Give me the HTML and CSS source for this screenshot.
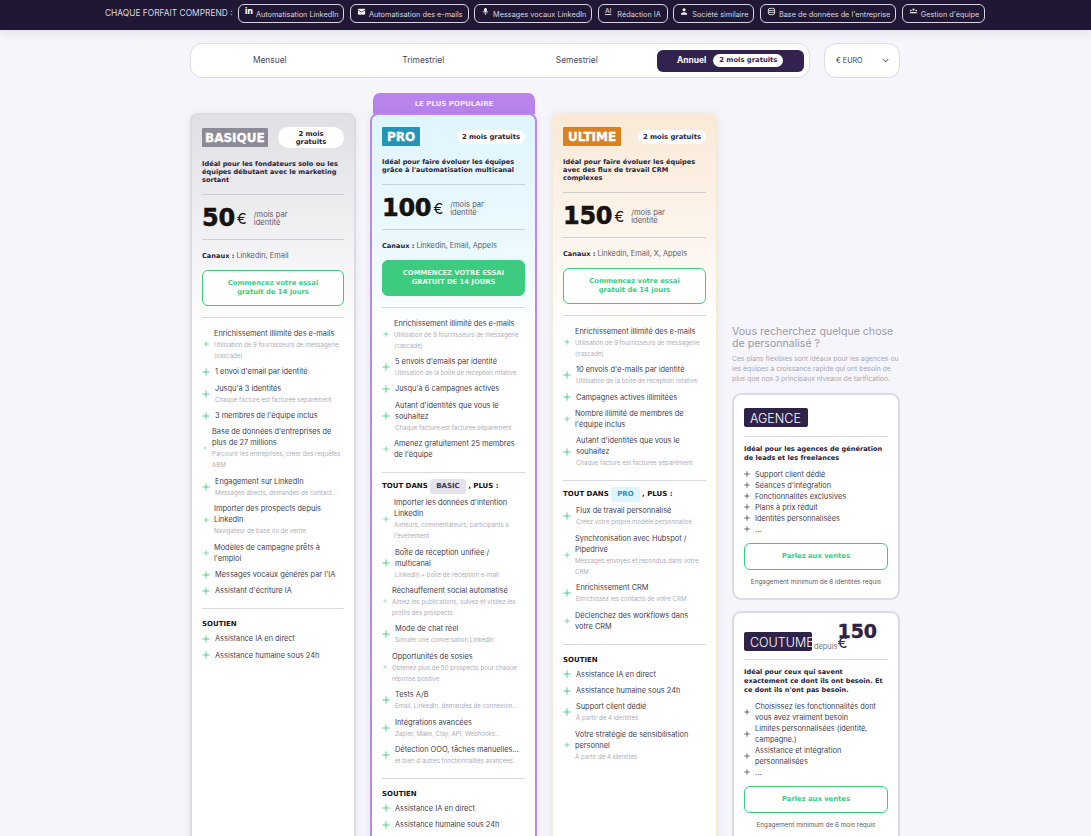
FILE: index.html
```html
<!DOCTYPE html>
<html lang="fr">
<head>
  <meta charset="UTF-8">
  <meta name="viewport" content="width=device-width, initial-scale=1.0">
  <title>Tarifs</title>
  <link rel="stylesheet" href="styles.css">
</head>
<body>
  <svg class="sprite" width="0" height="0">
    <symbol id="plus" viewBox="0 0 10 10"><path d="M5 .5v9M.5 5h9" fill="none" stroke="currentColor" stroke-width="1.1"/></symbol>
  </svg>

  <header class="topbar">
    <span class="topbar-label">CHAQUE FORFAIT COMPREND :</span>
    <span class="chip"><b class="chip-in">in</b> Automatisation LinkedIn</span>
    <span class="chip"><svg viewBox="0 0 10 10"><path d="M1 2h8v6.500H1z" fill="#fff"/><path d="M1 3.500l4 2 4-2" fill="none" stroke="#1f1733" stroke-width=".8"/></svg> Automatisation des e-mails</span>
    <span class="chip"><svg viewBox="0 0 10 10"><rect x="3.500" y="1" width="3" height="5" rx="1.500" fill="#fff"/><path d="M2.500 4.500c0 3.300 5 3.300 5 0M5 7v2" fill="none" stroke="#fff" stroke-width=".7"/></svg> Messages vocaux LinkedIn</span>
    <span class="chip chip-wide"><b class="chip-ai">AI</b> Rédaction IA</span>
    <span class="chip"><svg viewBox="0 0 10 10"><circle cx="4.500" cy="3" r="1.700" fill="#fff"/><path d="M1 8.500c0-3.500 7-3.500 7 0z" fill="#fff"/></svg> Société similaire</span>
    <span class="chip"><svg viewBox="0 0 10 10"><rect x="1.500" y="1.500" width="7" height="7" rx="2" fill="none" stroke="#fff" stroke-width=".9"/><path d="M1.500 4h7M1.500 6h7" stroke="#fff" stroke-width=".8"/></svg> Base de données de l'entreprise</span>
    <span class="chip"><svg viewBox="0 0 10 10"><circle cx="5" cy="3" r="1.200" fill="#fff"/><circle cx="2" cy="4" r=".9" fill="#fff"/><circle cx="8" cy="4" r=".9" fill="#fff"/><path d="M.5 7c0-2 9-2 9 0z" fill="#fff"/></svg> Gestion d'équipe</span>
  </header>

  <main class="page">
    <div class="controls">
      <nav class="tabs">
        <span class="tab">Mensuel</span>
        <span class="tab">Trimestriel</span>
        <span class="tab">Semestriel</span>
        <span class="tab tab-active"><b>Annuel</b> <em class="tab-pill">2 mois gratuits</em></span>
      </nav>
      <div class="currency">
        <span>€ EURO</span>
        <svg viewBox="0 0 10 10"><path d="M2 3.500l3 3 3-3" fill="none" stroke="#2a2140" stroke-width="1"/></svg>
      </div>
    </div>

    <div class="plans">
      <section class="plan plan-basic">
        <div class="plan-head">
          <span class="tag tag-basic">BASIQUE</span>
          <span class="free free-wrap">2 mois gratuits</span>
        </div>
        <p class="plan-desc">Idéal pour les fondateurs solo ou les équipes débutant avec le marketing sortant</p>
        <div class="price"><strong>50</strong><span class="euro">€</span><small>/mois par identité</small></div>
        <p class="channels"><b>Canaux :</b> Linkedin, Email</p>
        <a class="cta">Commencez votre essai<br>gratuit de 14 jours</a>
        <ul class="features">
          <li class="small-icon"><svg><use href="#plus"/></svg><div>Enrichissement illimité des e-mails<small>Utilisation de 9 fournisseurs de messagerie (cascade)</small></div></li>
          <li><svg><use href="#plus"/></svg><div>1 envoi d'email par identité</div></li>
          <li><svg><use href="#plus"/></svg><div>Jusqu'à 3 identités<small>Chaque facture est facturée séparément</small></div></li>
          <li><svg><use href="#plus"/></svg><div>3 membres de l'équipe inclus</div></li>
          <li class="tiny-icon"><svg><use href="#plus"/></svg><div>Base de données d'entreprises de plus de 27 millions<small>Parcourir les entreprises, créer des requêtes ABM</small></div></li>
          <li><svg><use href="#plus"/></svg><div>Engagement sur LinkedIn<small>Messages directs, demandes de contact...</small></div></li>
          <li class="small-icon"><svg><use href="#plus"/></svg><div>Importer des prospects depuis LinkedIn<small>Navigateur de base ou de vente</small></div></li>
          <li class="small-icon"><svg><use href="#plus"/></svg><div>Modèles de campagne prêts à l'emploi</div></li>
          <li><svg><use href="#plus"/></svg><div>Messages vocaux générés par l'IA</div></li>
          <li><svg><use href="#plus"/></svg><div>Assistant d'écriture IA</div></li>
        </ul>
        <h4 class="group-title">SOUTIEN</h4>
        <ul class="features features-sub">
          <li><svg><use href="#plus"/></svg><div>Assistance IA en direct</div></li>
          <li><svg><use href="#plus"/></svg><div>Assistance humaine sous 24h</div></li>
        </ul>
      </section>

      <div class="plan-col-popular">
        <div class="banner">LE PLUS POPULAIRE</div>
        <section class="plan plan-pro">
          <div class="plan-head">
            <span class="tag tag-pro">PRO</span>
            <span class="free">2 mois gratuits</span>
          </div>
          <p class="plan-desc">Idéal pour faire évoluer les équipes grâce à l'automatisation multicanal</p>
          <div class="price"><strong>100</strong><span class="euro">€</span><small>/mois par identité</small></div>
          <p class="channels"><b>Canaux :</b> Linkedin, Email, Appels</p>
          <a class="cta cta-solid">COMMENCEZ VOTRE ESSAI<br>GRATUIT DE 14 JOURS</a>
          <ul class="features">
            <li class="small-icon"><svg><use href="#plus"/></svg><div>Enrichissement illimité des e-mails<small>Utilisation de 9 fournisseurs de messagerie (cascade)</small></div></li>
            <li><svg><use href="#plus"/></svg><div>5 envois d'emails par identité<small>Utilisation de la boîte de réception rotative</small></div></li>
            <li><svg><use href="#plus"/></svg><div>Jusqu'à 6 campagnes actives</div></li>
            <li><svg><use href="#plus"/></svg><div>Autant d'identités que vous le souhaitez<small>Chaque facture est facturée séparément</small></div></li>
            <li class="small-icon"><svg><use href="#plus"/></svg><div>Amenez gratuitement 25 membres de l'équipe</div></li>
          </ul>
          <h4 class="group-title group-tagged">TOUT DANS <span class="mini-tag mini-basic">BASIC</span> , PLUS :</h4>
          <ul class="features features-sub">
            <li class="small-icon"><svg><use href="#plus"/></svg><div>Importer les données d'intention LinkedIn<small>Aimeurs, commentateurs, participants à l'événement</small></div></li>
            <li><svg><use href="#plus"/></svg><div>Boîte de réception unifiée / multicanal<small>LinkedIn + boîte de réception e-mail</small></div></li>
            <li class="tiny-icon"><svg><use href="#plus"/></svg><div>Réchauffement social automatisé<small>Aimez les publications, suivez et visitez les profils des prospects</small></div></li>
            <li><svg><use href="#plus"/></svg><div>Mode de chat réel<small>Simuler une conversation LinkedIn</small></div></li>
            <li class="tiny-icon"><svg><use href="#plus"/></svg><div>Opportunités de sosies<small>Obtenez plus de 50 prospects pour chaque réponse positive</small></div></li>
            <li><svg><use href="#plus"/></svg><div>Tests A/B<small>Email, LinkedIn, demandes de connexion...</small></div></li>
            <li><svg><use href="#plus"/></svg><div>Intégrations avancées<small>Zapier, Make, Clay, API, Webhooks...</small></div></li>
            <li><svg><use href="#plus"/></svg><div>Détection OOO, tâches manuelles...<small>et bien d'autres fonctionnalités avancées</small></div></li>
          </ul>
          <h4 class="group-title">SOUTIEN</h4>
          <ul class="features features-sub">
            <li><svg><use href="#plus"/></svg><div>Assistance IA en direct</div></li>
            <li><svg><use href="#plus"/></svg><div>Assistance humaine sous 24h</div></li>
          </ul>
        </section>
      </div>

      <section class="plan plan-ultimate">
        <div class="plan-head">
          <span class="tag tag-ultimate">ULTIME</span>
          <span class="free">2 mois gratuits</span>
        </div>
        <p class="plan-desc">Idéal pour faire évoluer les équipes avec des flux de travail CRM complexes</p>
        <div class="price"><strong>150</strong><span class="euro">€</span><small>/mois par identité</small></div>
        <p class="channels"><b>Canaux :</b> Linkedin, Email, X, Appels</p>
        <a class="cta">Commencez votre essai<br>gratuit de 14 jours</a>
        <ul class="features">
          <li class="small-icon"><svg><use href="#plus"/></svg><div>Enrichissement illimité des e-mails<small>Utilisation de 9 fournisseurs de messagerie (cascade)</small></div></li>
          <li><svg><use href="#plus"/></svg><div>10 envois d'e-mails par identité<small>Utilisation de la boîte de réception rotative</small></div></li>
          <li><svg><use href="#plus"/></svg><div>Campagnes actives illimitées</div></li>
          <li class="small-icon"><svg><use href="#plus"/></svg><div>Nombre illimité de membres de l'équipe inclus</div></li>
          <li><svg><use href="#plus"/></svg><div>Autant d'identités que vous le souhaitez<small>Chaque facture est facturée séparément</small></div></li>
        </ul>
        <h4 class="group-title group-tagged">TOUT DANS <span class="mini-tag mini-pro">PRO</span> , PLUS :</h4>
        <ul class="features features-sub">
          <li><svg><use href="#plus"/></svg><div>Flux de travail personnalisé<small>Créez votre propre modèle personnalisé</small></div></li>
          <li class="small-icon"><svg><use href="#plus"/></svg><div>Synchronisation avec Hubspot / Pipedrive<small>Messages envoyés et répondus dans votre CRM</small></div></li>
          <li><svg><use href="#plus"/></svg><div>Enrichissement CRM<small>Enrichissez les contacts de votre CRM</small></div></li>
          <li class="small-icon"><svg><use href="#plus"/></svg><div>Déclenchez des workflows dans votre CRM</div></li>
        </ul>
        <h4 class="group-title">SOUTIEN</h4>
        <ul class="features features-sub">
          <li><svg><use href="#plus"/></svg><div>Assistance IA en direct</div></li>
          <li><svg><use href="#plus"/></svg><div>Assistance humaine sous 24h</div></li>
          <li><svg><use href="#plus"/></svg><div>Support client dédié<small>À partir de 4 identités</small></div></li>
          <li class="small-icon"><svg><use href="#plus"/></svg><div>Votre stratégie de sensibilisation personnel<small>À partir de 4 identités</small></div></li>
        </ul>
      </section>

      <aside class="custom">
        <h3 class="custom-title">Vous recherchez quelque chose de personnalisé ?</h3>
        <p class="custom-text">Ces plans flexibles sont idéaux pour les agences ou les équipes à croissance rapide qui ont besoin de plus que nos 3 principaux niveaux de tarification.</p>

        <div class="custom-card">
          <div class="custom-head"><span class="tag-dark">AGENCE</span></div>
          <p class="custom-desc">Idéal pour les agences de génération de leads et les freelances</p>
          <ul class="custom-list">
            <li><svg><use href="#plus"/></svg>Support client dédié</li>
            <li><svg><use href="#plus"/></svg>Séances d'intégration</li>
            <li><svg><use href="#plus"/></svg>Fonctionnalités exclusives</li>
            <li><svg><use href="#plus"/></svg>Plans à prix réduit</li>
            <li><svg><use href="#plus"/></svg>Identités personnalisées</li>
            <li><svg><use href="#plus"/></svg>...</li>
          </ul>
          <a class="cta cta-sales">Parlez aux ventes</a>
          <p class="custom-note">Engagement minimum de 6 identités requis</p>
        </div>

        <div class="custom-card custom-card-tall">
          <div class="custom-head custom-head-price">
            <span class="tag-dark tag-wide">COUTUME</span>
            <span class="since">depuis</span>
            <span class="since-price"><strong>150</strong><span class="euro">€</span></span>
          </div>
          <p class="custom-desc">Idéal pour ceux qui savent exactement ce dont ils ont besoin. Et ce dont ils n'ont pas besoin.</p>
          <ul class="custom-list">
            <li><svg><use href="#plus"/></svg>Choisissez les fonctionnalités dont vous avez vraiment besoin</li>
            <li><svg><use href="#plus"/></svg>Limites personnalisées (identité, campagne.)</li>
            <li><svg><use href="#plus"/></svg>Assistance et intégration personnalisées</li>
            <li><svg><use href="#plus"/></svg>...</li>
          </ul>
          <a class="cta cta-sales">Parlez aux ventes</a>
          <p class="custom-note">Engagement minimum de 6 mois requis</p>
        </div>
      </aside>
    </div>
  </main>
</body>
</html>
```

FILE: styles.css
```css
* {
  box-sizing: border-box;
}

html, body {
  height: 100%;
  overflow: hidden;
}

body {
  margin: 0;
  background: #f5f5fb;
  color: #45414f;
  font-family: Inter, "Liberation Sans", sans-serif;
  font-size: 7.4px;
  line-height: 11px;
}

.sprite {
  position: absolute;
}

p, h3, h4, ul {
  margin: 0;
  padding: 0;
}

ul {
  list-style: none;
}

/* top bar */
.topbar {
  display: flex;
  align-items: center;
  gap: 5.5px;
  height: 30px;
  padding: 0 0 4px 105px;
  background: #1f1733;
  color: #d9d8e0;
  box-shadow: 0 4px 10px rgba(31, 23, 51, 0.08);
}

.topbar-label {
  font-size: 8.4px;
}

.chip {
  display: flex;
  align-items: center;
  gap: 3px;
  height: 19px;
  padding: 3px 5px 0 6px;
  border: 1px solid #d8d6de;
  border-radius: 6px;
  font-size: 7.3px;
  white-space: nowrap;
}

.chip-wide {
  gap: 6px;
  padding-right: 6px;
}

.chip svg {
  width: 9px;
  height: 9px;
  margin-top: -7px;
}

.chip-in {
  margin-top: -7px;
  color: #fff;
  font-size: 8.5px;
  font-weight: 800;
}

.chip-ai {
  margin-top: -7px;
  font-size: 6.5px;
  font-weight: 500;
  text-decoration: underline;
}

/* period tabs */
.page {
  width: 710px;
  margin-left: 190px;
  padding-top: 13px;
}

.controls {
  display: flex;
  justify-content: space-between;
  height: 35px;
}

.tabs {
  display: grid;
  grid-template-columns: repeat(4, 1fr);
  align-items: center;
  width: 620px;
  padding: 0 2px;
  background: #fff;
  border: 1px solid #dcdbe3;
  border-radius: 12px;
  font-size: 8.4px;
}

.tab {
  text-align: center;
  color: #4c4858;
}

.tab-active {
  display: flex;
  align-items: center;
  justify-content: center;
  gap: 7px;
  height: 22px;
  margin: 0 3px;
  background: #33224f;
  border-radius: 6px;
  color: #fff;
}

.tab-pill {
  padding: 1px 6px;
  background: #fff;
  border-radius: 8px;
  color: #33224f;
  font-family: "DejaVu Sans", sans-serif;
  font-size: 6.8px;
  font-style: normal;
  font-weight: 700;
}

.currency {
  display: flex;
  align-items: center;
  justify-content: space-between;
  width: 76px;
  padding: 0 9px 0 11px;
  background: #fff;
  border: 1px solid #dcdbe3;
  border-radius: 12px;
  font-size: 7.2px;
}

.currency svg {
  width: 9px;
  height: 9px;
}

/* plans */
.plans {
  display: grid;
  grid-template-columns: 166px 167px 167px 168px;
  gap: 14px;
  align-items: start;
  margin-top: 35px;
}

.plan {
  height: 900px;
  padding: 12px 10px 0;
  border: 2px solid #dcdbe2;
  border-radius: 8px;
  background: linear-gradient(#e0dfe4 0, #fff 220px);
  box-shadow: 0 0 8px rgba(80, 70, 110, 0.08);
}

.plan-pro {
  height: 760px;
  border-color: #b98aea;
  background: linear-gradient(#dff5fd 0, #eefafe 150px, #fff 215px);
}

.plan-ultimate {
  border-color: #f8ead9;
  background: linear-gradient(#f9e9d6 0, #fff 220px);
}

.plan-col-popular {
  margin-top: -20px;
}

.banner {
  margin: 0 2px -1px 3px;
  height: 21px;
  padding-top: 2px;
  background: #b983ec;
  border-radius: 7px 7px 0 0;
  color: #f3e9fd;
  font-family: "DejaVu Sans", sans-serif;
  font-size: 7px;
  font-weight: 700;
  line-height: 19px;
  text-align: center;
}

.plan-head {
  display: flex;
  align-items: center;
  justify-content: space-between;
  min-height: 19px;
}

.tag {
  height: 19px;
  padding: 0 3px;
  border-radius: 1px;
  color: #fff;
  font-family: "DejaVu Sans", sans-serif;
  font-size: 12px;
  font-weight: 700;
  line-height: 20px;
  -webkit-text-stroke: 0.3px #fff;
}

.tag-basic { background: #8d8a98; }
.tag-pro { background: #2495b5; padding: 0 5px; }
.tag-ultimate { background: #d98320; padding: 0 5px; }

.free {
  padding: 0 5px;
  background: #fff;
  border-radius: 8px;
  color: #2a2438;
  font-family: "DejaVu Sans", sans-serif;
  font-size: 6.8px;
  font-weight: 700;
  line-height: 14px;
  white-space: nowrap;
}

.free-wrap {
  width: 66px;
  padding: 3px 8px 2px;
  border-radius: 11px;
  line-height: 8px;
  text-align: center;
  white-space: normal;
}

.plan-desc {
  margin-top: 11.5px;
  padding-bottom: 9.5px;
  border-bottom: 1px solid #cfced6;
  color: #2a2438;
  font-family: "DejaVu Sans", sans-serif;
  font-size: 6.6px;
  font-weight: 700;
  line-height: 8.3px;
}

.price {
  display: flex;
  align-items: center;
  gap: 2px;
  height: 45px;
  padding-top: 4px;
  border-bottom: 1px solid #cfced6;
  color: #17120f;
}

.price strong {
  font-family: "DejaVu Sans", sans-serif;
  font-size: 24px;
  font-weight: 700;
  letter-spacing: -0.3px;
  -webkit-text-stroke: 0.5px #17120f;
}

.euro {
  font-size: 15px;
  font-weight: 400;
}

.price small {
  width: 45px;
  margin-left: 5px;
  color: #5f5b69;
  font-size: 7.6px;
  line-height: 8px;
}

.channels {
  margin-top: 10px;
  color: #5f5b69;
}

.channels b {
  color: #2a2438;
  font-family: "DejaVu Sans", sans-serif;
  font-size: 6.6px;
}

.cta {
  display: block;
  margin-top: 8px;
  padding: 8px 0;
  border: 1px solid #3ccb7f;
  border-radius: 6px;
  background: #fff;
  color: #3ccb7f;
  font-family: "DejaVu Sans", sans-serif;
  font-size: 6.8px;
  font-weight: 700;
  line-height: 9px;
  text-align: center;
}

.cta-solid {
  background: #3ccb7f;
  color: #e8fbf0;
}

.features {
  display: flex;
  flex-direction: column;
  gap: 5.4px;
  margin-top: 11.5px;
  padding-top: 9.5px;
  border-top: 1px solid #d9d8de;
}

.features-sub {
  margin-top: 3px;
  padding-top: 0;
  border-top: 0;
}

.features li {
  display: flex;
  align-items: center;
  gap: 5px;
}

.features svg {
  flex: 0 0 8px;
  width: 8px;
  height: 8px;
  color: #3ccb7f;
}

.features .small-icon svg {
  flex-basis: 6px;
  width: 6px;
  margin-left: 1px;
}

.features .tiny-icon svg {
  flex-basis: 4px;
  width: 4px;
  margin-left: 1px;
}

.features small {
  display: block;
  color: #aeacb7;
  font-size: 6.1px;
  line-height: 11px;
}

.group-title {
  margin-top: 12px;
  padding-top: 10px;
  border-top: 1px solid #d9d8de;
  color: #17120f;
  font-family: "DejaVu Sans", sans-serif;
  font-size: 7px;
  font-weight: 700;
}

.group-tagged {
  padding-top: 6px;
}

.mini-tag {
  display: inline-block;
  height: 15px;
  padding: 0 6px;
  border-radius: 3px;
  line-height: 15px;
}

.mini-basic { background: #e3e1ea; color: #3d3650; }
.mini-pro { background: #dff5fd; color: #2495b5; }

/* custom column */
.custom {
  padding-top: 213px;
}

.custom-title {
  color: #9c9aa8;
  font-size: 10.6px;
  font-weight: 400;
  line-height: 11.5px;
}

.custom-text {
  margin-top: 5px;
  color: #aaa8b3;
  font-size: 6.8px;
  line-height: 10px;
}

.custom-card {
  height: 207px;
  margin-top: 9px;
  padding: 13px 10px 0;
  background: #fff;
  border: 2px solid #dcdbe2;
  border-radius: 9px;
}

.custom-card-tall {
  height: 250px;
  margin-top: 11px;
  padding-top: 11px;
}

.custom-head {
  display: flex;
  align-items: flex-end;
  padding-bottom: 9px;
  border-bottom: 1px solid #d9d8de;
}

.custom-head-price {
  padding-bottom: 8px;
}

.tag-dark {
  flex: 0 0 auto;
  width: 64px;
  height: 19px;
  padding-left: 6px;
  background: #2f2249;
  border-radius: 2px;
  color: #fff;
  font-size: 12.5px;
  font-weight: 300;
  line-height: 21px;
  white-space: nowrap;
}

.tag-wide {
  width: 68px;
}

.since {
  margin-left: 2px;
  color: #77747f;
  font-size: 7.4px;
  line-height: 9px;
}

.since-price {
  width: 40px;
  color: #2f2249;
  line-height: 10px;
}

.since-price strong {
  display: block;
  font-family: "DejaVu Sans", sans-serif;
  font-size: 19px;
  font-weight: 700;
  line-height: 14px;
  -webkit-text-stroke: 0.4px #2f2249;
}

.custom-desc {
  margin-top: 7.5px;
  color: #2a2438;
  font-family: "DejaVu Sans", sans-serif;
  font-size: 6.6px;
  font-weight: 700;
  line-height: 9px;
}

.custom-list {
  margin-top: 6px;
}

.custom-list li {
  display: flex;
  align-items: center;
  gap: 5px;
}

.custom-list svg {
  flex: 0 0 6px;
  width: 6px;
  height: 6px;
  color: #2a2438;
}

.cta-sales {
  height: 27px;
  margin-top: 8px;
  padding: 0;
  line-height: 25px;
}

.custom-note {
  margin-top: 7px;
  color: #5f5b69;
  font-size: 6.4px;
  text-align: center;
}
```
